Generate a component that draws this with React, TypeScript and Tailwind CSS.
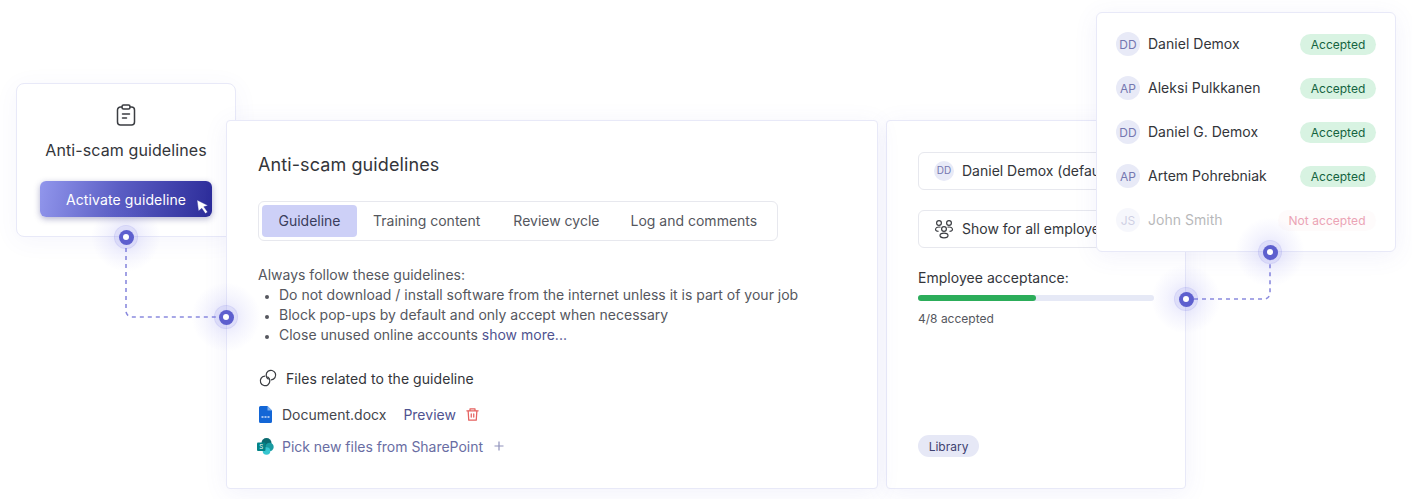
import React from "react";

const font = { fontFamily: "Inter, 'Liberation Sans', sans-serif" };

function Dot({ cls }: { cls: string }) {
  return (
    <div className={`absolute z-30 w-[70px] h-[70px] rounded-full flex items-center justify-center bg-[radial-gradient(circle,rgba(110,110,235,0.2)_0%,rgba(110,110,235,0.07)_40%,rgba(110,110,235,0)_70%)] ${cls}`}>
      <div className="w-[24px] h-[24px] rounded-full bg-[#6b6be0]/10 border border-[#6b6be0]/10 flex items-center justify-center">
        <div className="w-[15px] h-[15px] rounded-full bg-[#5d5fce] flex items-center justify-center">
          <div className="w-[6px] h-[6px] rounded-full bg-white" />
        </div>
      </div>
    </div>
  );
}

const people = [
  { i: "DD", n: "Daniel Demox", ok: true },
  { i: "AP", n: "Aleksi Pulkkanen", ok: true },
  { i: "DD", n: "Daniel G. Demox", ok: true },
  { i: "AP", n: "Artem Pohrebniak", ok: true },
  { i: "JS", n: "John Smith", ok: false },
];

function Person({ i, n, ok }: { i: string; n: string; ok: boolean }) {
  return (
    <div className="flex items-center h-[44px]">
      <div className={`w-6 h-6 rounded-full bg-[#e8eaf7] text-[#7477b0] text-[12px] flex items-center justify-center pt-[1px] ${ok ? "" : "opacity-35"}`}>{i}</div>
      <div className={`ml-2 text-[14px] leading-5 tracking-[0.02px] text-[#33353a] ${ok ? "" : "opacity-35"}`}>{n}</div>
      {ok ? (
        <div className="ml-auto h-[21px] w-[76px] pt-[1px] rounded-full bg-[#d8f3e2] text-[#14633f] text-[12px] flex items-center justify-center">Accepted</div>
      ) : (
        <div className="ml-auto h-[21px] w-[98px] pt-[1px] rounded-full bg-[#fefbfb] text-[#eba3b5] text-[12px] tracking-[0.05px] flex items-center justify-center">Not accepted</div>
      )}
    </div>
  );
}

export default function App() {
  return (
    <div style={font} className="relative w-[1412px] h-[499px] bg-white overflow-hidden text-[#33353a]">
      {/* connectors */}
      <svg className="absolute inset-0 z-0" width="1412" height="499" fill="none">
        <path d="M126 240V311a6 6 0 0 0 6 6H226" stroke="#8a8ade" strokeWidth="1.6" strokeDasharray="4 4" />
        <path d="M1186 299H1264a6 6 0 0 0 6-6V252" stroke="#8a8ade" strokeWidth="1.6" strokeDasharray="4 4" />
      </svg>

      {/* small card */}
      <div className="absolute z-10 left-[16px] top-[83px] w-[220px] h-[154px] rounded-[8px] border border-[#e8e9f8] bg-white shadow-[0_4px_24px_rgba(90,90,200,0.06)] flex flex-col items-center">
        <svg className="mt-[20px] text-[#3b3d42]" width="20" height="22" viewBox="0 0 20 22" fill="none" stroke="currentColor" strokeWidth="1.5" strokeLinecap="round" strokeLinejoin="round">
          <path d="M6 3H4.5A3 3 0 0 0 1.5 6v12a3 3 0 0 0 3 3h11a3 3 0 0 0 3-3V6a3 3 0 0 0-3-3H14" />
          <rect x="6" y="1" width="8" height="4" rx="1.5" />
          <path d="M6.5 10h7M6.5 14h4" />
        </svg>
        <div className="mt-[12px] text-[16px] leading-6 tracking-[0.1px] text-[#33353a]">Anti-scam guidelines</div>
        <div className="relative mt-[19px] w-[172px] h-[36px] rounded-[6px] bg-[linear-gradient(100deg,#9196ec_0%,#5b5ec4_45%,#2c2c99_100%)] shadow-[0_2px_6px_rgba(40,40,120,0.35)] text-white text-[14px] tracking-[0.12px] flex items-center justify-center">
          Activate guideline
          <svg className="absolute left-[156px] top-[18px]" width="14" height="16" viewBox="0 0 14 16">
            <path d="M1 1l11 5.5-4.2 1.3 3.8 5.2-2.2 1.6-3.6-5.3L2.5 12z" fill="#fff" stroke="#2c2c99" strokeWidth="0.4" />
          </svg>
        </div>
      </div>

      {/* main card */}
      <div className="absolute z-20 left-[226px] top-[120px] w-[652px] h-[369px] rounded-[4px] border border-[#e8e9f8] bg-white shadow-[0_4px_24px_rgba(90,90,200,0.08)] pl-[31px] pt-[31px]">
        <div className="text-[18px] leading-[26px] tracking-[0.1px] text-[#33353a]">Anti-scam guidelines</div>
        <div className="mt-[23px] w-[520px] h-[40px] rounded-[6px] border border-[#e7e8ee] flex items-center pl-[3px] text-[14px] text-[#55575e]">
          <div className="w-[95px] h-[32px] pb-[1px] rounded-[4px] bg-[#cdd0f7] text-[#3a3d5c] flex items-center justify-center">Guideline</div>
          <div className="ml-[16px] pb-[1px]">Training content</div>
          <div className="ml-[33px] pb-[1px]">Review cycle</div>
          <div className="ml-[31px] pb-[1px]">Log and comments</div>
        </div>
        <div className="mt-[24px] text-[14px] leading-[20px] text-[#55575e]">
          <div>Always follow these guidelines:</div>
          <ul className="list-disc pl-[21px] marker:text-[11px]">
            <li>Do not download / install software from the internet unless it is part of your job</li>
            <li>Block pop-ups by default and only accept when necessary</li>
            <li>Close unused online accounts <span className="text-[#4f5390]">show more...</span></li>
          </ul>
        </div>
        <div className="mt-[23px] flex items-center h-[20px] text-[14px] text-[#33353a]">
          <svg width="20" height="20" viewBox="0 0 24 24" fill="none" stroke="#3b3d42" strokeWidth="1.5" strokeLinecap="round">
            <path d="M12.23 13.17A5.7 5.7 0 1 1 16 14.18" />
            <path d="M11.77 10.83A5.7 5.7 0 1 1 8 9.82" />
          </svg>
          <span className="ml-[8px] tracking-[0.06px]">Files related to the guideline</span>
        </div>
        <div className="mt-[16px] flex items-center h-[20px] text-[14px] text-[#44464c]">
          <svg width="13" height="17" viewBox="0 0 13 17" className="ml-[1px]">
            <path d="M1.5 0H8.5L13 4.5V15.5a1.5 1.5 0 0 1-1.5 1.5h-10A1.5 1.5 0 0 1 0 15.5V1.5A1.5 1.5 0 0 1 1.5 0z" fill="#1366d6" />
            <path d="M8.5 0V4.5H13z" fill="#7fb0ee" />
            <path d="M2.5 11h8" stroke="#cfe0fa" strokeWidth="1.4" strokeDasharray="2 1" />
          </svg>
          <span className="ml-[10px]">Document.docx</span>
          <span className="ml-[17px] text-[#4f5390]">Preview</span>
          <svg className="ml-[9px]" width="15" height="15" viewBox="0 0 24 24" fill="none" stroke="#e5615f" strokeWidth="2" strokeLinecap="round" strokeLinejoin="round">
            <path d="M3 6h18M8 6V3h8v3M5 6l1 15h12l1-15M10 11v5M14 11v5" />
          </svg>
        </div>
        <div className="mt-[12px] flex items-center h-[20px] text-[14px] text-[#696da3]">
          <svg width="17" height="17" viewBox="0 0 17 17" className="ml-[-1px]">
            <circle cx="9.5" cy="5" r="5" fill="#0b6a70" />
            <circle cx="12.5" cy="9" r="4.2" fill="#1a9ba1" />
            <circle cx="9.5" cy="13" r="3.8" fill="#37c6d0" />
            <rect x="0" y="4.5" width="8.5" height="8.5" rx="1" fill="#038387" />
            <text x="4.2" y="11" fontSize="6" fill="#fff" textAnchor="middle">S</text>
          </svg>
          <span className="ml-[8px] tracking-[-0.02px]">Pick new files from SharePoint</span>
          <svg className="ml-[10px]" width="12" height="12" viewBox="0 0 12 12" stroke="#8f92bb" strokeWidth="1.2">
            <path d="M6 1.5v9M1.5 6h9" />
          </svg>
        </div>
      </div>

      {/* right card */}
      <div className="absolute z-10 left-[886px] top-[120px] w-[300px] h-[369px] rounded-[4px] border border-[#e8e9f8] bg-white shadow-[0_4px_24px_rgba(90,90,200,0.08)] pl-[31px] pr-[31px] pt-[31px] flex flex-col">
        <div className="w-[268px] h-[38px] rounded-[6px] border border-[#e7e8ee] flex items-center pl-[15px] pb-[1px] text-[14px] text-[#33353a] whitespace-nowrap">
          <div className="w-5 h-5 rounded-full bg-[#e8eaf7] text-[#7477b0] text-[10px] flex items-center justify-center shrink-0">DD</div>
          <span className="ml-[8px]">Daniel Demox (default)</span>
        </div>
        <div className="mt-[20px] w-[268px] h-[38px] rounded-[6px] border border-[#e7e8ee] flex items-center pl-[15px] pb-[1px] text-[14px] text-[#33353a] whitespace-nowrap">
          <svg width="20" height="20" viewBox="0 0 20 20" fill="none" stroke="#3b3d42" strokeWidth="1.2" className="shrink-0">
            <circle cx="5" cy="4" r="2.4" /><circle cx="15" cy="4" r="2.4" /><circle cx="10" cy="10" r="2.4" />
            <path d="M1.5 11c0-2 1.5-3 3.5-3 .6 0 1 .1 1.5.3M18.5 11c0-2-1.5-3-3.5-3-.6 0-1 .1-1.5.3" />
            <path d="M1.5 11c.5 1 1.5 1.4 3 1.4M18.5 11c-.5 1-1.5 1.4-3 1.4" />
            <ellipse cx="10" cy="16.5" rx="4" ry="2.3" />
          </svg>
          <span className="ml-[8px]">Show for all employees</span>
        </div>
        <div className="mt-[20px] text-[14px] leading-5 tracking-[0.03px] text-[#33353a]">Employee acceptance:</div>
        <div className="mt-[7px] w-[236px] h-[6px] rounded-full bg-[#e6e9f6]">
          <div className="h-full w-1/2 rounded-full bg-[#2cad5a]" />
        </div>
        <div className="mt-[8px] text-[12px] leading-5 text-[#55575e]">4/8 accepted</div>
        <div className="mt-auto mb-[31px] self-start h-[22px] w-[61px] pt-[1px] rounded-full bg-[#e6e8f6] text-[#3f4270] text-[12px] flex items-center justify-center">Library</div>
      </div>

      {/* popover */}
      <div className="absolute z-20 left-[1096px] top-[12px] w-[300px] h-[240px] rounded-[6px] border border-[#e8e9f8] bg-white shadow-[0_4px_24px_rgba(90,90,200,0.08)] px-[19px] pt-[9px]">
        {people.map((p) => (
          <Person key={p.n} i={p.i} n={p.n} ok={p.ok} />
        ))}
      </div>

      <Dot cls="left-[91px] top-[202px]" />
      <Dot cls="left-[191px] top-[282px]" />
      <Dot cls="left-[1151px] top-[264px]" />
      <Dot cls="left-[1235px] top-[217px]" />
    </div>
  );
}
